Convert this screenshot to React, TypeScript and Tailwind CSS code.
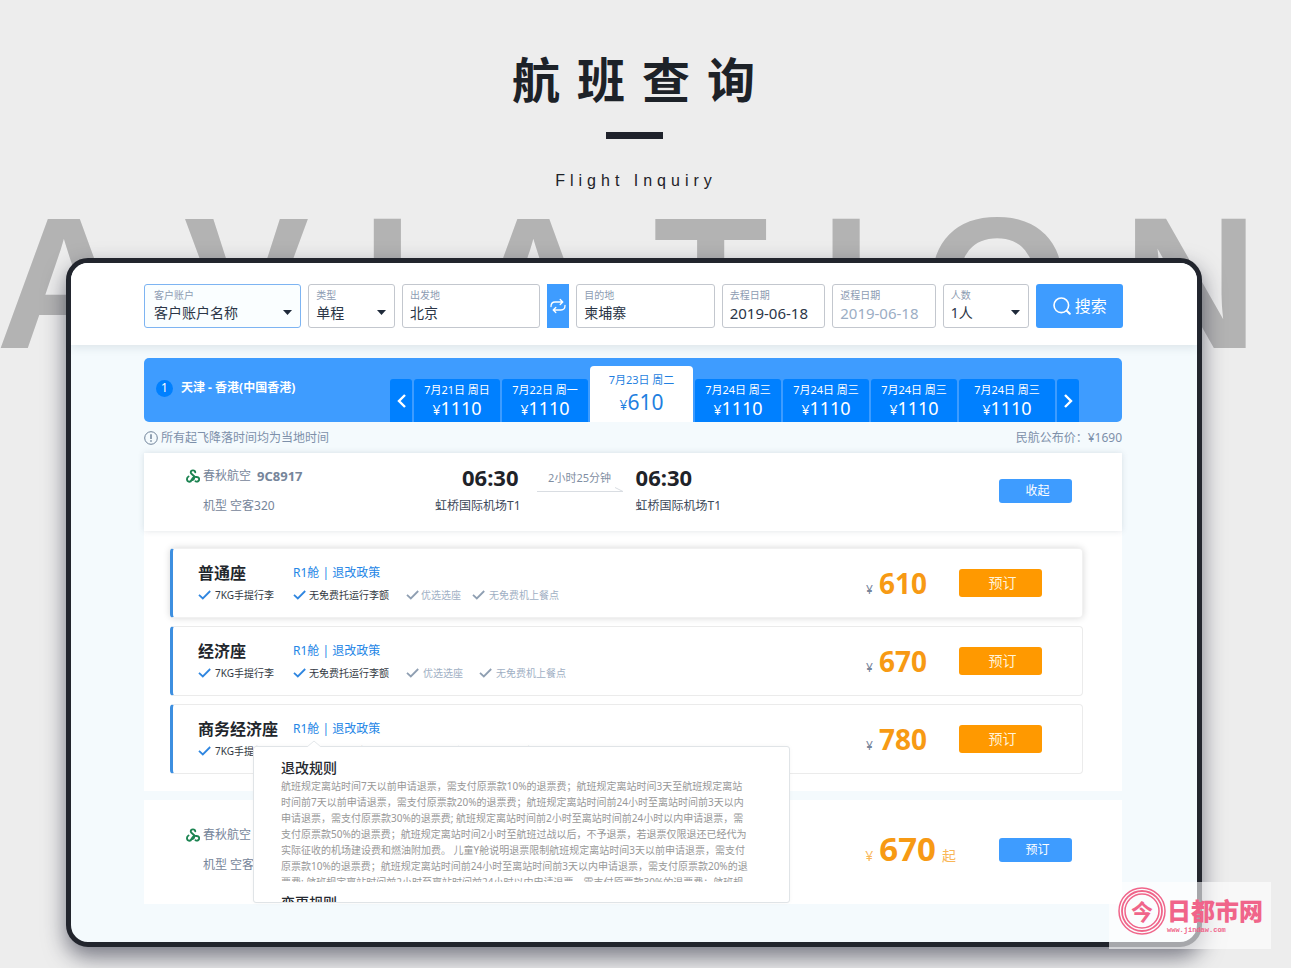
import React from "react";

const days = [
  { date: "7月21日 周日", price: "1110" },
  { date: "7月22日 周一", price: "1110" },
  { date: "7月23日 周二", price: "610", active: true },
  { date: "7月24日 周三", price: "1110" },
  { date: "7月24日 周三", price: "1110" },
  { date: "7月24日 周三", price: "1110" },
  { date: "7月24日 周三", price: "1110", wide: true },
];

const cabins = [
  { name: "普通座", price: "610", raised: true },
  { name: "经济座", price: "670" },
  { name: "商务经济座", price: "780", open: true },
];

const refundRules = [
  "航班规定离站时间7天以前申请退票，需支付原票款10%的退票费；航班规定离站时间3天至航班规定离站",
  "时间前7天以前申请退票，需支付原票款20%的退票费；航班规定离站时间前24小时至离站时间前3天以内",
  "申请退票，需支付原票款30%的退票费; 航班规定离站时间前2小时至离站时间前24小时以内申请退票，需",
  "支付原票款50%的退票费；航班规定离站时间2小时至航班过战以后，不予退票，若退票仅限退还已经代为",
  "实际征收的机场建设费和燃油附加费。 儿童Y舱说明退票限制航班规定离站时间3天以前申请退票，需支付",
  "原票款10%的退票费；航班规定离站时间前24小时至离站时间前3天以内申请退票，需支付原票款20%的退",
  "票费; 航班规定离站时间前2小时至离站时间前24小时以内申请退票，需支付原票款30%的退票费；航班规",
];

function Caret() {
  return (
    <svg className="pointer-events-none absolute right-2 bottom-3 h-[5px] w-[9px]" viewBox="0 0 9 5" aria-hidden="true">
      <path d="M0 0h9L4.500 5z" fill="#1f2a3a" />
    </svg>
  );
}

const fieldBase = "relative flex h-11 min-w-0 flex-col rounded-[3px] border pt-[3px]";
const fieldLabel = "text-[10px] leading-[14px] text-[#8d9cb2]";
const fieldValue = "mt-px h-5 w-full min-w-0 appearance-none bg-transparent p-0 leading-5 outline-none";

function SelectField({ id, label, value, className }: { id: string; label: string; value: string; className: string }) {
  return (
    <div className={`${fieldBase} ${className}`}>
      <label htmlFor={id} className={fieldLabel}>{label}</label>
      <select id={id} defaultValue={value} className={`${fieldValue} text-sm text-[#2b3647]`}>
        <option value={value}>{value}</option>
      </select>
      <Caret />
    </div>
  );
}

function TextField({ id, label, value, valueClass }: { id: string; label: string; value: string; valueClass: string }) {
  return (
    <div className={`${fieldBase} border-[#c3c7ce] pl-[7px]`}>
      <label htmlFor={id} className={fieldLabel}>{label}</label>
      <input id={id} type="text" defaultValue={value} className={`${fieldValue} ${valueClass}`} />
    </div>
  );
}

function Check({ muted }: { muted?: boolean }) {
  return (
    <svg className="h-[10px] w-[13px] shrink-0" viewBox="0 0 13 10" fill="none" aria-hidden="true">
      <path d="M1 4.800L4.800 8.400L12.200 1" stroke={muted ? "#8f9fb2" : "#2f86e0"} strokeWidth="1.800" />
    </svg>
  );
}

function AirlineLogo() {
  return (
    <svg className="h-[14px] w-[14px] shrink-0" viewBox="0 0 28 28" fill="none" stroke="#1d8452" strokeWidth="3.800" strokeLinecap="round" aria-hidden="true">
      <path d="M18.500 6.500C18 1.500 9.500 1.500 9.500 7C9.500 11.500 17 11 16.500 16.500C16.500 20 14.500 21.500 12.500 22" />
      <path d="M5 15C0.500 17.500 1 25 6.500 25.500C12 26 10.500 19 15.500 16.500" />
      <path d="M19 24.500C23.500 27 27.500 22.500 26 18.500C24 14 20 17.500 16.500 15" />
    </svg>
  );
}

function Airline({ flight }: { flight?: string }) {
  return (
    <div className="w-[249px] shrink-0 text-xs leading-5 text-[#76859a]">
      <div className="flex items-center">
        <AirlineLogo />
        <span className="ml-[3px]">春秋航空</span>
        <span className="ml-1.5 text-[13px] font-bold">{flight}</span>
      </div>
      <div className="mt-2.5 ml-[17px]">机型 空客320</div>
    </div>
  );
}

function RulesPopover() {
  return (
    <div role="dialog" aria-label="退改规则" className="absolute top-[29px] -left-10 z-20 w-[537px]">
      <svg className="absolute -top-[6px] left-[54px] z-10 h-[7px] w-[14px]" viewBox="0 0 14 7" aria-hidden="true">
        <path d="M0 7L7 1L14 7" fill="#fff" stroke="#e3e7ea" />
      </svg>
      <div className="h-[157px] overflow-hidden rounded-[3px] border border-[#e0e4e7] bg-white pt-[11px] pl-[27px] shadow-[0_0_4px_rgba(0,0,0,0.04)]">
        <h3 className="text-sm leading-5 font-medium text-[#262a30]">退改规则</h3>
        <div className="h-[104px] overflow-hidden text-[10px] leading-4 whitespace-nowrap text-[#979797]">
          {refundRules.map((line) => (
            <p key={line}>{line}</p>
          ))}
        </div>
        <h3 className="mt-[11px] text-sm leading-5 font-medium text-[#262a30]">变更规则</h3>
      </div>
    </div>
  );
}

function CabinRow({ name, price, raised, open }: { name: string; price: string; raised?: boolean; open?: boolean }) {
  return (
    <li
      className={`flex h-[70px] items-center rounded-[4px] border border-l-[3px] border-l-[#3d8fe0] bg-white pr-10 pl-[25px] ${
        raised ? "border-[#f1f1f1] shadow-[0_0_7px_rgba(0,0,0,0.16)]" : "border-[#ebebeb]"
      }`}
    >
      <div className="flex-1">
        <div className="flex h-6 items-center">
          <h2 className="w-[95px] text-base leading-6 font-bold whitespace-nowrap text-[#22262c]">{name}</h2>
          <div className="relative">
            <a href="#rules" className="block text-xs leading-6 whitespace-nowrap text-[#2385e6]">R1舱 | 退改政策</a>
            {open && <RulesPopover />}
          </div>
        </div>
        <ul className="flex h-5 items-center text-[10px] leading-5 whitespace-nowrap text-[#333a44]">
          <li className="flex w-[95px] items-center gap-1"><Check />7KG手提行李</li>
          <li className="flex w-[113px] items-center gap-[3px]"><Check />无免费托运行李额</li>
          <li className={`flex items-center text-[#9fb0c4] ${raised ? "w-[66px] gap-[2px]" : "w-[73px] gap-1"}`}><Check muted />优选选座</li>
          <li className="flex items-center gap-1 text-[#9fb0c4]"><Check muted />无免费机上餐点</li>
        </ul>
      </div>
      <div className="mr-8 flex items-baseline gap-1.5 text-[#76859a]">
        <span className="text-xs leading-5">¥</span>
        <strong className="text-[28px] leading-8 font-bold text-[#f79a14]">{price}</strong>
      </div>
      <button type="button" className="h-7 w-[83px] rounded-[3px] bg-[#ff9900] pl-1 text-sm text-[#fff3d9]">预订</button>
    </li>
  );
}

export default function App() {
  return (
    <div className="relative overflow-hidden bg-[#ededed] pr-[89px] pb-[22px] pl-[66px] font-['Noto_Sans','Noto_Sans_CJK_SC',sans-serif]">
      <div aria-hidden="true" className="absolute top-[192px] -left-1 flex gap-[52px] font-['Liberation_Sans',sans-serif] text-[188px] leading-[183px] font-bold text-[#b3b3b3]">
        <span>A</span><span>V</span><span>I</span><span>A</span><span>T</span><span>I</span><span>O</span><span>N</span>
      </div>

      <header className="relative flex flex-col items-center pt-[49px] text-[#1d2228]">
        <h1 className="pl-4 font-['Noto_Sans_CJK_SC',sans-serif] text-5xl leading-[56px] font-bold tracking-[17px]">航班查询</h1>
        <div className="mt-[27px] h-[7px] w-[57px] bg-[#1f222b]" />
        <p className="mt-8 pl-1 font-['Liberation_Sans',sans-serif] text-base leading-5 tracking-[5px]">Flight Inquiry</p>
      </header>

      <main className="relative mt-[67px] rounded-[22px] border-[5px] border-[#22252d] bg-[#f4fafd] shadow-[0_10px_22px_rgba(40,42,60,0.6)]">
        <form
          className="relative grid grid-cols-[158fr_87fr_139fr_22px_139fr_104fr_104fr_87fr_87fr] gap-[7px] rounded-t-[17px] bg-white pt-[21px] pr-[74px] pb-[17px] pl-[73px] shadow-[0_3px_8px_rgba(60,80,100,0.12)]"
          onSubmit={(e) => e.preventDefault()}
        >
          <SelectField id="account" label="客户账户" value="客户账户名称" className="border-[#7db4f2] bg-[#fafeff] pl-[9px]" />
          <SelectField id="type" label="类型" value="单程" className="border-[#c3c7ce] pl-[7px]" />
          <TextField id="from" label="出发地" value="北京" valueClass="text-sm text-[#2b3647]" />
          <button type="button" aria-label="交换出发地和目的地" className="flex items-center justify-center bg-[#3e9cff]">
            <svg className="h-4 w-4" viewBox="0 0 16 16" fill="none" stroke="#fff" strokeWidth="1.300" strokeLinecap="round" strokeLinejoin="round" aria-hidden="true">
              <path d="M1 8.500C1 5.500 2.800 4 5 4H12.500M10.200 1.500L12.800 4L10.200 6.500" />
              <path d="M15 7.500C15 10.500 13.200 12 11 12H3.500M5.800 9.500L3.200 12L5.800 14.500" />
            </svg>
          </button>
          <TextField id="to" label="目的地" value="柬埔寨" valueClass="text-sm text-[#2b3647]" />
          <TextField id="depart" label="去程日期" value="2019-06-18" valueClass="text-[15px] text-[#2b3647]" />
          <TextField id="return" label="返程日期" value="2019-06-18" valueClass="text-[15px] text-[#9badc4]" />
          <SelectField id="people" label="人数" value="1人" className="border-[#c3c7ce] pl-[7px]" />
          <button type="submit" className="flex h-11 min-w-0 items-center justify-center gap-1 rounded-[3px] bg-[#3e9cff] text-base text-white">
            <svg className="h-[18px] w-[18px]" viewBox="0 0 18 18" fill="none" stroke="#fff" strokeWidth="1.600" strokeLinecap="round" aria-hidden="true">
              <circle cx="8.300" cy="8.300" r="7.300" />
              <path d="M14 14L16.800 16.800" strokeWidth="2" />
            </svg>
            搜索
          </button>
        </form>

        <div className="pt-[13px] pr-[75px] pb-[38px] pl-[73px]">
          <section className="flex h-16 items-end rounded-[5px] bg-[#3e9cff] pr-[43px] pl-3 text-white">
            <div className="flex flex-1 items-center gap-2 self-start pt-5">
              <span className="flex h-[17px] w-[17px] items-center justify-center rounded-full bg-[#0080ff] text-xs">1</span>
              <h2 className="text-xs leading-5 font-bold">天津 - 香港(中国香港)</h2>
            </div>
            <div className="flex items-end gap-[2px]">
              <button type="button" aria-label="前一天" className="flex h-[43px] w-[22px] items-center justify-center rounded-t-[3px] bg-[#0080ff]">
                <svg className="h-[14px] w-[9px]" viewBox="0 0 9 14" fill="none" stroke="#fff" strokeWidth="2.400" aria-hidden="true"><path d="M8 1L2 7L8 13" /></svg>
              </button>
              {days.map((d, i) =>
                d.active ? (
                  <button key={i} type="button" aria-pressed="true" className="flex h-14 w-[103px] flex-col items-center rounded-t-[4px] bg-white pt-1.5 text-[#1f7fe0]">
                    <span className="text-[11px] leading-4">{d.date}</span>
                    <span className="text-[21px] leading-7"><span className="text-sm">¥</span>{d.price}</span>
                  </button>
                ) : (
                  <button key={i} type="button" className={`flex h-[43px] flex-col items-center rounded-t-[3px] bg-[#0080ff] pt-[3px] ${d.wide ? "w-[96px]" : "w-[86px]"}`}>
                    <span className="text-[11px] leading-4">{d.date}</span>
                    <span className="text-lg leading-5"><span className="text-sm">¥</span>{d.price}</span>
                  </button>
                ),
              )}
              <button type="button" aria-label="后一天" className="flex h-[43px] w-[22px] items-center justify-center rounded-t-[3px] bg-[#0080ff]">
                <svg className="h-[14px] w-[9px]" viewBox="0 0 9 14" fill="none" stroke="#fff" strokeWidth="2.400" aria-hidden="true"><path d="M1 1L7 7L1 13" /></svg>
              </button>
            </div>
          </section>

          <div className="flex h-[31px] items-center justify-between text-xs text-[#7d90aa]">
            <p className="flex items-center gap-[3px]">
              <svg className="h-[14px] w-[14px]" viewBox="0 0 14 14" fill="none" stroke="#6f8299" aria-hidden="true">
                <circle cx="7" cy="7" r="6.300" />
                <path d="M7 3.200V8" strokeWidth="1.500" />
                <path d="M7 9.300V10.800" strokeWidth="1.500" />
              </svg>
              所有起飞降落时间均为当地时间
            </p>
            <p>民航公布价：¥1690</p>
          </div>

          <article className="relative z-10 bg-white">
            <div className="flex items-start pt-[13px] pr-[50px] pb-[15px] pl-[42px] shadow-[0_0_6px_rgba(70,90,110,0.16)]">
              <Airline flight="9C8917" />
              <div className="text-right">
                <div className="pr-0.5 text-[22px] leading-[22px] font-bold text-[#1f2329]">06:30</div>
                <div className="mt-2 text-xs leading-5 text-[#3c4859]">虹桥国际机场T1</div>
              </div>
              <div className="mr-[13px] ml-4 w-[86px] pt-1 text-center text-[11px] leading-4 text-[#7f8ea2]">
                2小时25分钟
                <svg className="block h-[6px] w-[86px]" viewBox="0 0 86 6" fill="none" stroke="#d9dde2" aria-hidden="true"><path d="M0 5.500H86L78 1.500" /></svg>
              </div>
              <div>
                <div className="text-[22px] leading-[22px] font-bold text-[#1f2329]">06:30</div>
                <div className="mt-2 text-xs leading-5 text-[#3c4859]">虹桥国际机场T1</div>
              </div>
              <button type="button" className="ml-auto h-6 w-[73px] self-center rounded-[3px] bg-[#3e9cff] pl-1 text-xs text-white">收起</button>
            </div>
            <ul className="flex flex-col gap-2 pt-[17px] pr-[39px] pb-[17px] pl-[26px]">
              {cabins.map((c) => (
                <CabinRow key={c.name} {...c} />
              ))}
            </ul>
          </article>

          <article className="mt-[9px] flex items-start bg-white pt-[25px] pr-[50px] pb-[29px] pl-[42px]">
            <Airline flight="9C8917" />
            <div className="mr-[43px] ml-auto flex items-baseline gap-1.5 text-sm leading-5 text-[#f9b656]">
              <span>¥</span>
              <strong className="text-[33px] leading-[48px] font-bold text-[#f79a14]">670</strong>
              <span>起</span>
            </div>
            <button type="button" className="h-6 w-[73px] self-center rounded-[3px] bg-[#3e9cff] pl-1 text-xs text-white">预订</button>
          </article>
        </div>
      </main>

      <aside className="absolute right-5 bottom-5 z-30 flex h-[67px] w-[162px] items-start bg-white/60 pt-1 pl-2 text-[#f0658a]">
        <div className="relative flex h-[50px] w-[50px] shrink-0 items-center justify-center">
          <svg className="absolute inset-0 h-[50px] w-[50px]" viewBox="0 0 50 50" fill="none" stroke="#f0658a" aria-hidden="true">
            <circle cx="25" cy="25" r="23" strokeWidth="1.500" />
            <circle cx="25" cy="25" r="20" strokeWidth="1.800" />
            <circle cx="25" cy="25" r="17" strokeWidth="1.500" />
          </svg>
          <span className="text-[22px] leading-6 font-bold">今</span>
        </div>
        <div className="pt-[10px]">
          <div className="text-2xl leading-[30px] font-black">日都市网</div>
          <div className="font-['Liberation_Mono',monospace] text-[7px] leading-2 font-bold">www.jindaw.com</div>
        </div>
      </aside>
    </div>
  );
}
